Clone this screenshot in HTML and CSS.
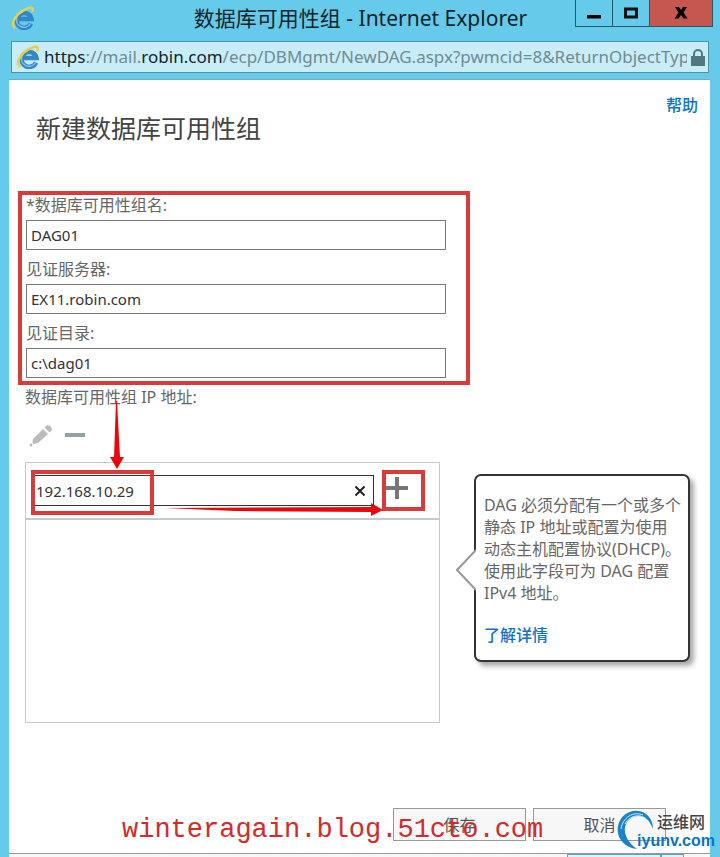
FILE: index.html
```html
<!DOCTYPE html>
<html lang="zh-CN">
  <head>
    <meta charset="UTF-8" />
    <meta name="viewport" content="width=device-width, initial-scale=1.0" />
    <title>数据库可用性组 - Internet Explorer</title>
    <link rel="stylesheet" href="styles.css">
  </head>
  <body>
    <!-- Shared browser logo -->
    <svg class="sprite" aria-hidden="true">
      <symbol id="ie-logo" viewBox="0 0 24 24">
        <path d="M20 17.500A7.500 7.500 0 1 1 20.500 13H8" fill="none" stroke="#3287c4" stroke-width="4.500" />
        <path d="M19.500 17.500A7.500 7.500 0 0 1 5.500 13A7.500 7.500 0 0 1 12 6" fill="none" stroke="#79c4f2" stroke-width="1.500" />
        <path d="M3.500 21.500C-1 17 6 7 14 3.500C20 .5 22.500 1.500 21.500 5" fill="none" stroke="#e6d04c" stroke-width="2.500" stroke-linecap="round" />
      </symbol>
    </svg>

    <div class="window">
      <header class="titlebar">
        <svg class="ie-icon"><use href="#ie-logo" /></svg>
        <h1>数据库可用性组 - Internet Explorer</h1>
        <div class="window-controls">
          <button type="button" aria-label="最小化">
            <svg width="14" height="12"><path d="M0 8h14v3.500H0z" /></svg>
          </button>
          <button type="button" aria-label="最大化">
            <svg width="14" height="12"><path d="M1.500 2h11v8h-11z" fill="none" stroke="#111" stroke-width="3" /></svg>
          </button>
          <button type="button" class="close" aria-label="关闭">
            <svg width="14" height="12"><path d="M1 0h4l2 3 2-3h4L9.500 5.500 13.500 11.500h-4L7 8l-2.500 3.500h-4L4.500 5.500z" /></svg>
          </button>
        </div>
      </header>

      <div class="address-bar">
        <svg class="ie-icon"><use href="#ie-logo" /></svg>
        <span class="url"><b>https</b>://mail.<b>robin.com</b>/ecp/DBMgmt/NewDAG.aspx?pwmcid=8&amp;ReturnObjectTyp</span>
        <svg class="lock" viewBox="0 0 14 17"><path d="M0 7h14v10H0z" fill="#52777f" /><path d="M3 8V5a4 4 0 0 1 8 0v3" fill="none" stroke="#52777f" stroke-width="2" /></svg>
      </div>

      <main class="page">
        <div class="page-head">
          <h2>新建数据库可用性组</h2>
          <a href="#">帮助</a>
        </div>

        <form class="dag-form" id="dagForm">
          <div class="form-main">
            <div class="fields">
              <label for="dagName">*数据库可用性组名:</label>
              <input type="text" id="dagName" value="DAG01" />
              <label for="witnessServer">见证服务器:</label>
              <input type="text" id="witnessServer" value="EX11.robin.com" />
              <label for="witnessDir">见证目录:</label>
              <input type="text" id="witnessDir" value="c:\dag01" />
            </div>

            <div class="ip-section">
              <label for="ipAddress">数据库可用性组 IP 地址:</label>
              <div class="toolbar">
                <button type="button" aria-label="编辑">
                  <svg width="24" height="24"><path d="M4 16L14 6l5 5L9 20l-5 1q-1-2 0-5z" fill="#bbb" /><path d="M15.500 4.500l2-2q2-1 4 1t1 4l-2 2z" fill="#bbb" /><circle cx="2" cy="22" r="1.500" fill="#bbb" /></svg>
                </button>
                <button type="button" aria-label="删除">
                  <svg width="20" height="24"><path d="M0 10h20v4H0z" fill="#93a1a3" /></svg>
                </button>
              </div>
              <div class="ip-list">
                <div class="ip-entry">
                  <div class="ip-box">
                    <input type="text" id="ipAddress" value="192.168.10.29" />
                    <button type="button" aria-label="清除">
                      <svg width="12" height="12"><path d="M1.500 1.500l9 9M10.500 1.500l-9 9" stroke="#222" stroke-width="2" /></svg>
                    </button>
                  </div>
                  <button type="button" class="add" aria-label="添加">
                    <svg width="22" height="22"><path d="M9 0h4v9h9v4h-9v9H9v-9H0V9h9z" fill="#777" /></svg>
                  </button>
                </div>
                <!-- Hand-drawn guide arrows -->
                <span class="mark mark-ip"></span>
                <svg class="mark-down" width="16" height="68"><path d="M7 0h1l3 56h4L8 68 1 56h4z" fill="#e8080c" /></svg>
                <svg class="mark-right" width="220" height="16"><path d="M0 6l206-1V1l12 7-12 6v-4L70 9z" fill="#e8080c" /></svg>
              </div>
            </div>
          </div>

          <aside class="callout">
            <svg class="callout-tip" width="20" height="42"><path d="M20 1v40L1 21z" fill="#fff" /><path d="M20 1L1 21l19 20" fill="none" stroke="#999" stroke-width="2" /></svg>
            <p>DAG 必须分配有一个或多个<br />静态 IP 地址或配置为使用<br />动态主机配置协议(DHCP)。<br />使用此字段可为 DAG 配置<br />IPv4 地址。</p>
            <a href="#">了解详情</a>
          </aside>
        </form>

        <footer class="actions">
          <button type="submit" form="dagForm">保存</button>
          <button type="button">取消</button>
          <span class="watermark">winteragain.blog.51cto.com</span>
          <div class="site-logo">
            <svg width="42" height="42" viewBox="0 0 42 42">
              <path d="M22 40C8 38 1 28 3 17C6 3 21-2 31 5C36 9 38 14 38 20C34 9 26 5 18 8C7 13 6 29 22 40z" fill="#1a82cc" />
              <path d="M6 20C8 8 18 2 28 6M10 15C15 5 28 4 34 13" fill="none" stroke="#cfe9f8" stroke-width="1" />
            </svg>
            <span class="site-name">运维网</span>
            <span class="site-domain">iyunv.com</span>
          </div>
        </footer>
        <div class="statusbar"><span class="zoom-box"></span><span class="zoom-arrow"></span></div>
      </main>
    </div>
  </body>
</html>
```

FILE: styles.css
```css
* {
  margin: 0;
  padding: 0;
  box-sizing: border-box;
}

body {
  font-family: "Noto Sans", "Noto Sans CJK SC", sans-serif;
  font-size: 16px;
  line-height: 22px;
  color: #666;
  background: #66caea;
}

button {
  font: inherit;
  background: none;
  border: none;
}

svg {
  display: block;
}

a {
  color: #0e72c6;
  text-decoration: none;
  font-weight: 500;
}

.sprite {
  position: absolute;
  width: 0;
  height: 0;
}

.window {
  display: flex;
  flex-direction: column;
  min-height: 100vh;
  padding: 0 10px 0 9px;
}

/* Browser chrome */
.titlebar {
  display: grid;
  grid-template-columns: 1fr auto 1fr;
  height: 41px;
  padding-left: 2px;
}

.titlebar h1 {
  font-size: 21px;
  font-weight: 400;
  line-height: 36px;
  color: #10242b;
}

.ie-icon {
  width: 24px;
  height: 24px;
  flex: none;
}

.titlebar .ie-icon {
  margin-top: 6px;
}

.window-controls {
  display: flex;
  justify-self: end;
  height: 27px;
  margin-right: -3px;
  border: 1px solid #245a6c;
  border-top: none;
}

.window-controls button {
  display: flex;
  align-items: center;
  justify-content: center;
  width: 37px;
  border-right: 1px solid #245a6c;
}

.window-controls .close {
  width: 62px;
  background: #c5574e;
  border-right: none;
}

.address-bar {
  display: flex;
  align-items: center;
  height: 32px;
  margin: 0 1px 6px 2px;
  padding: 0 3px 0 4px;
  background: #c9edf8;
  border: 1px solid #4b93ab;
}

.url {
  flex: 1;
  margin: 0 4px;
  overflow: hidden;
  white-space: nowrap;
  font-size: 17px;
  color: #6f8a93;
}

.url b {
  font-weight: 400;
  color: #10242b;
}

.lock {
  width: 14px;
  height: 17px;
}

/* Page */
.page {
  flex: 1;
  display: flex;
  flex-direction: column;
  background: #fff;
  border-top: 1px solid #7fa9b8;
}

.page-head {
  display: flex;
  justify-content: space-between;
  padding: 14px 12px 0 27px;
  height: 111px;
}

.page-head h2 {
  margin-top: 17px;
  font-size: 25px;
  font-weight: 400;
  line-height: 34px;
  color: #444;
}

.dag-form {
  display: grid;
  grid-template-columns: 1fr 216px;
  gap: 4px;
  align-items: start;
  padding: 0 20px 0 9px;
}

label {
  display: block;
}

input {
  width: 100%;
  font: inherit;
  font-size: 15px;
  color: #333;
  border: 1px solid #777;
  outline: none;
}

.fields {
  padding: 0 20px 3px 4px;
  border: 4px solid #d93b3b;
}

.fields label {
  height: 25px;
  line-height: 20px;
}

.fields input {
  display: block;
  height: 30px;
  padding: 0 4px;
  margin-bottom: 9px;
}

.fields input:last-child {
  margin-bottom: 0;
}

.ip-section {
  padding: 1px 30px 0 7px;
}

.toolbar {
  display: flex;
  align-items: center;
  gap: 12px;
  height: 54px;
  padding-left: 4px;
}

.ip-list {
  position: relative;
  height: 261px;
  border: 1px solid #c3cbce;
}

.ip-entry {
  display: flex;
  gap: 8px;
  height: 57px;
  padding: 7px 14px 7px 8px;
  border-bottom: 2px solid #c3cbce;
}

.ip-box {
  position: relative;
  flex: 1;
  margin-top: 5px;
}

.ip-box input {
  height: 31px;
  padding: 0 30px 0 1px;
  border-color: #333;
}

.ip-box button {
  position: absolute;
  top: 10px;
  right: 8px;
}

.add {
  width: 43px;
  height: 41px;
  border: 4px solid #d93b3b;
}

.add svg {
  margin-bottom: 6px;
}

.mark {
  position: absolute;
  top: 7px;
  left: 5px;
  width: 123px;
  height: 45px;
  border: 4px solid #d93b3b;
}

.mark-down {
  position: absolute;
  top: -62px;
  left: 83px;
}

.mark-right {
  position: absolute;
  top: 39px;
  left: 139px;
}

/* Help callout */
.callout {
  position: relative;
  height: 188px;
  margin-top: 283px;
  padding: 18px 0 0 8px;
  background: #fff;
  border: 2px solid #333;
  border-radius: 7px;
  box-shadow: 4px 4px 5px #aaa;
  white-space: nowrap;
}

.callout p {
  margin-bottom: 20px;
}

.callout-tip {
  position: absolute;
  top: 73px;
  left: -20px;
}

/* Footer */
.actions {
  position: relative;
  display: flex;
  justify-content: flex-end;
  gap: 7px;
  margin-top: auto;
  padding: 0 44px 12px 0;
}

.actions button {
  width: 133px;
  height: 33px;
  background: #f7f7f7;
  border: 1px solid #999;
  color: #555;
}

.watermark {
  position: absolute;
  top: 6px;
  left: 113px;
  font-family: "Liberation Mono", monospace;
  font-size: 27px;
  line-height: 32px;
  color: #d42a2a;
}

.site-logo {
  position: absolute;
  top: 1px;
  right: -5px;
  width: 100px;
  height: 42px;
}

.site-name {
  position: absolute;
  top: 2px;
  right: 10px;
  color: #444;
  font-weight: 500;
}

.site-domain {
  position: absolute;
  top: 21px;
  right: 0;
  font-family: "Liberation Sans", sans-serif;
  font-size: 16px;
  font-weight: 700;
  color: #0a74c4;
}

.statusbar {
  display: flex;
  justify-content: flex-end;
  height: 4px;
  padding-right: 26px;
  background: #f7f7f7;
  border-top: 1px solid #999;
}

.zoom-box,
.zoom-arrow {
  border: 1px solid #4aa8cc;
  border-bottom: none;
  background: #dff3fa;
}

.zoom-box {
  width: 94px;
}

.zoom-arrow {
  width: 23px;
}
```
